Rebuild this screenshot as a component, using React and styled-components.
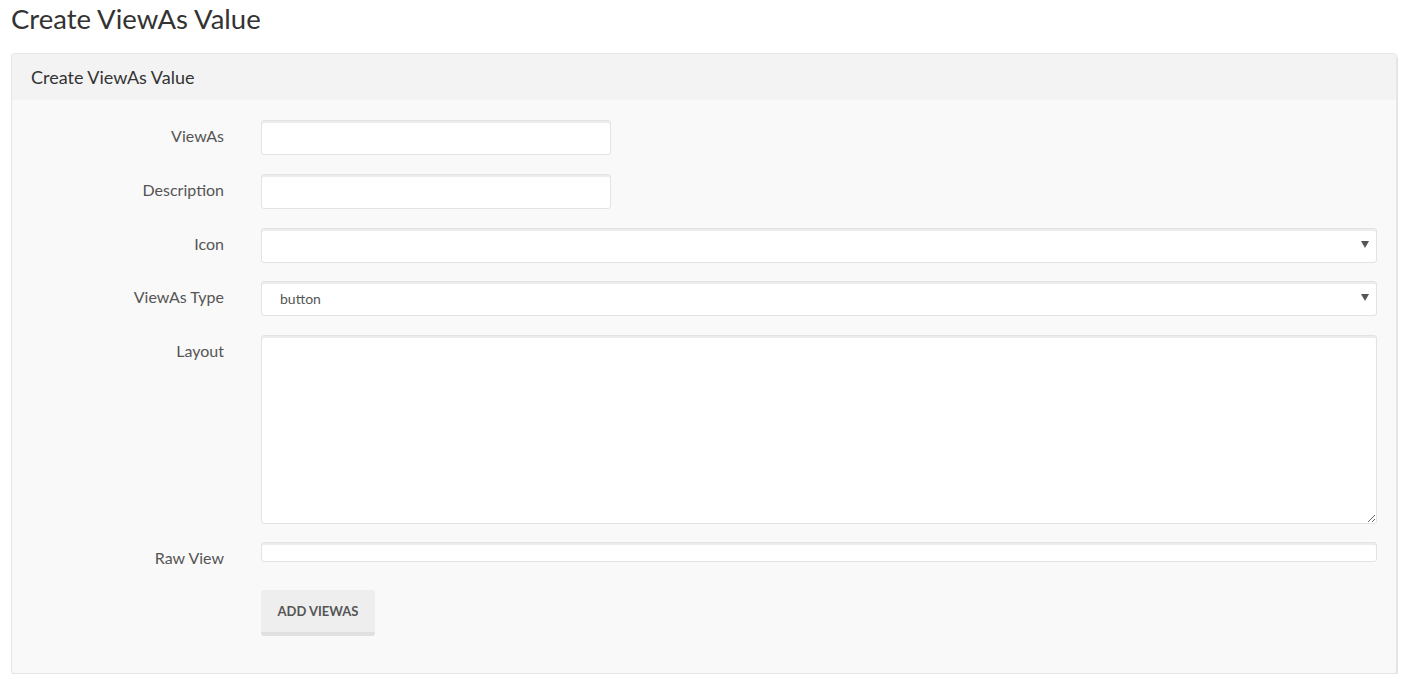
import React from 'react';
import styled, { createGlobalStyle } from 'styled-components';

const GlobalStyle = createGlobalStyle`
  body {
    margin: 0;
    background: #fff;
    font-family: Lato, "Liberation Sans", sans-serif;
    color: #555;
  }
`;

const Page = styled.div`
  padding: 0 6px 0 11px;
`;

const PageTitle = styled.h1`
  margin: 0;
  padding-top: 4px;
  height: 49px;
  font-size: 27.5px;
  font-weight: 400;
  line-height: 30px;
  color: #333;
`;

const Panel = styled.div`
  border: 1px solid #e6e6e6;
  border-radius: 3px;
  background: #f9f9f9;
  box-shadow: 1px 3px 0 #e4e4e4;
`;

const PanelHeading = styled.div`
  height: 46px;
  padding: 0 19px;
  display: flex;
  align-items: center;
  background: #f3f3f3;
  font-size: 18px;
  color: #333;
  border-radius: 3px 3px 0 0;
`;

const Form = styled.form`
  display: grid;
  grid-template-columns: 212px 1fr;
  column-gap: 37px;
  row-gap: 18.6px;
  padding: 20.4px 19px 37px 0;
`;

const Label = styled.label`
  text-align: right;
  font-size: 16px;
  line-height: 22px;
  padding-top: 5px;
  color: #555;
`;

const fieldBase = `
  box-sizing: border-box;
  width: 100%;
  border: 1px solid #e3e3e3;
  border-radius: 3px;
  background: #fff;
  box-shadow: inset 0 2px 0 #ececec;
  font-family: Lato, "Liberation Sans", sans-serif;
  font-size: 14px;
  color: #555;
  outline: none;
`;

const Input = styled.input`
  ${fieldBase}
  display: block;
  width: ${p => p.$short ? '350px' : '100%'};
  height: ${p => p.$h || 35}px;
  padding: 0 12px;
`;

const SelectWrap = styled.div`
  position: relative;
`;

const Select = styled.select`
  ${fieldBase}
  display: block;
  height: 35px;
  padding: 0 18px;
  appearance: none;
`;

const Arrow = styled.span`
  position: absolute;
  right: 8px;
  top: 13px;
  width: 0;
  height: 0;
  border-left: 4px solid transparent;
  border-right: 4px solid transparent;
  border-top: 7px solid #555;
  pointer-events: none;
`;

const TextArea = styled.textarea`
  ${fieldBase}
  display: block;
  height: 189px;
  padding: 8px 12px;
`;

const Button = styled.button`
  grid-column: 2;
  justify-self: start;
  margin-top: 2px;
  width: 114px;
  height: 46px;
  border: none;
  border-bottom: 4px solid #e0e0e0;
  border-radius: 3px;
  background: #eeeeee;
  font-family: Lato, "Liberation Sans", sans-serif;
  font-size: 13px;
  font-weight: 700;
  color: #555;
  cursor: pointer;
`;

function SelectField({ value, children }) {
  return (
    <SelectWrap>
      <Select defaultValue={value}>{children}</Select>
      <Arrow />
    </SelectWrap>
  );
}

export default function App() {
  return (
    <Page>
      <GlobalStyle />
      <PageTitle>Create ViewAs Value</PageTitle>
      <Panel>
        <PanelHeading>Create ViewAs Value</PanelHeading>
        <Form onSubmit={e => e.preventDefault()}>
          <Label>ViewAs</Label>
          <div><Input $short /></div>
          <Label>Description</Label>
          <div><Input $short /></div>
          <Label>Icon</Label>
          <SelectField value="">
            <option value=""></option>
          </SelectField>
          <Label>ViewAs Type</Label>
          <SelectField value="button">
            <option value="button">button</option>
            <option value="link">link</option>
          </SelectField>
          <Label>Layout</Label>
          <TextArea />
          <Label>Raw View</Label>
          <div><Input $h={20} /></div>
          <Button type="submit">ADD VIEWAS</Button>
        </Form>
      </Panel>
    </Page>
  );
}
